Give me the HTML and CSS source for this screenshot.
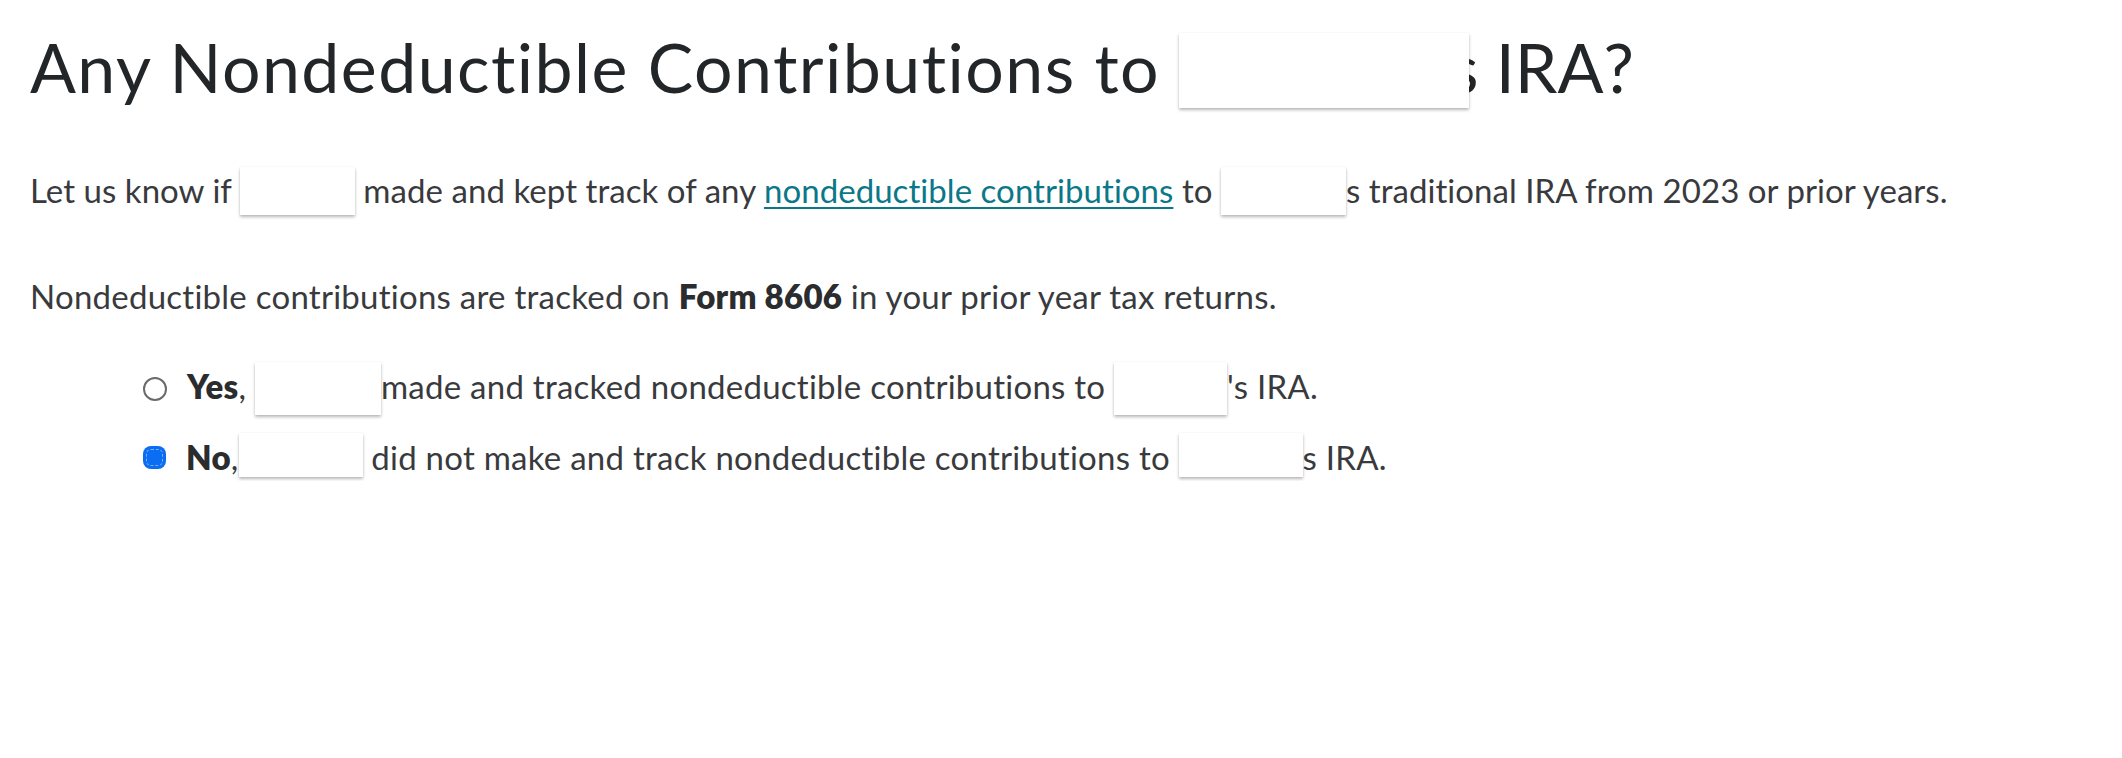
FILE: index.html
```html
<!DOCTYPE html>
<html lang="en">
<head>
<meta charset="utf-8">
<title>Nondeductible Contributions</title>
<link rel="stylesheet" href="styles.css">
</head>
<body>
<main class="page">
  <h1 class="title">Any Nondeductible Contributions to <span class="redact redact-title"></span><span class="tail-title">s IRA?</span></h1>
  <p class="para">Let us know if <span class="redact redact-p r1"></span> made and kept track of any <a class="link" href="#">nondeductible contributions</a> to <span class="redact redact-p r2"></span>s traditional IRA from 2023 or prior years.</p>
  <p class="para">Nondeductible contributions are tracked on <strong>Form 8606</strong> in your prior year tax returns.</p>
  <div class="options">
    <label class="option">
      <span class="radio"></span>
      <span class="opt-text"><strong>Yes</strong>, <span class="redact redact-yes y1"></span>made and tracked nondeductible contributions to <span class="redact redact-yes y2"></span>'s IRA.</span>
    </label>
    <label class="option">
      <span class="radio checked"><span class="dot"></span></span>
      <span class="opt-text"><strong>No</strong>,<span class="redact redact-no n1"></span> did not make and track nondeductible contributions to <span class="redact redact-no n2"></span>s IRA.</span>
    </label>
  </div>
</main>
</body>
</html>
```

FILE: styles.css
```css
html, body {
  margin: 0;
  padding: 0;
  background: #ffffff;
}

body {
  font-family: Lato, "Noto Sans", "DejaVu Sans", sans-serif;
  color: #393a3d;
}

.page {
  padding: 0 0 0 30px;
}

.title {
  margin: 0;
  padding-top: 22px;
  font-size: 68px;
  font-weight: 400;
  line-height: 90px;
  color: #232629;
  letter-spacing: 1.45px;
}

.redact {
  display: inline-block;
  background: #ffffff;
  box-shadow: 0 2px 3px rgba(0, 0, 0, 0.28), 0 0 1px rgba(0, 0, 0, 0.08);
  position: relative;
  z-index: 1;
  letter-spacing: 0;
}

.redact-title {
  width: 290px;
  height: 75px;
  vertical-align: -15px;
}

.tail-title {
  margin-left: -20px;
  letter-spacing: 0;
}

.para {
  margin: 0;
  font-size: 33px;
  line-height: 48px;
  letter-spacing: 0.05px;
}

.para:first-of-type {
  margin-top: 54px;
}

.para + .para {
  margin-top: 57px;
  letter-spacing: 0.25px;
}

.redact-p {
  height: 48px;
  vertical-align: -12px;
}

.r1 { width: 115px; }
.r2 { width: 125px; }

.link {
  color: #0a7888;
  text-decoration: underline;
  text-decoration-thickness: 2px;
  text-underline-offset: 4px;
}

strong {
  font-weight: 800;
  color: #2b2c2e;
}

.options {
  margin-top: 42px;
  padding-left: 113px;
  display: flex;
  flex-direction: column;
  gap: 18px;
}

.option {
  display: flex;
  align-items: center;
  gap: 20px;
  font-size: 33px;
  line-height: 48px;
  letter-spacing: 0.25px;
}

.radio {
  width: 20px;
  height: 20px;
  border: 2px solid #6b6b6b;
  border-radius: 50%;
  flex: none;
  box-sizing: content-box;
}

.radio.checked {
  width: 23px;
  height: 23px;
  border: none;
  border-radius: 8px;
  background: #0b6ef2;
  display: flex;
  align-items: center;
  justify-content: center;
}

.radio.checked .dot {
  width: 15px;
  height: 15px;
  border: 1px dashed rgba(255, 255, 255, 0.45);
  border-radius: 5px;
}

.redact-yes {
  height: 53px;
  vertical-align: -16px;
}

.y1 { width: 126px; }
.y2 { width: 113px; }

.redact-no {
  height: 44px;
  vertical-align: -7px;
}

.n1 { width: 124px; }
.n2 { width: 124px; }
```
